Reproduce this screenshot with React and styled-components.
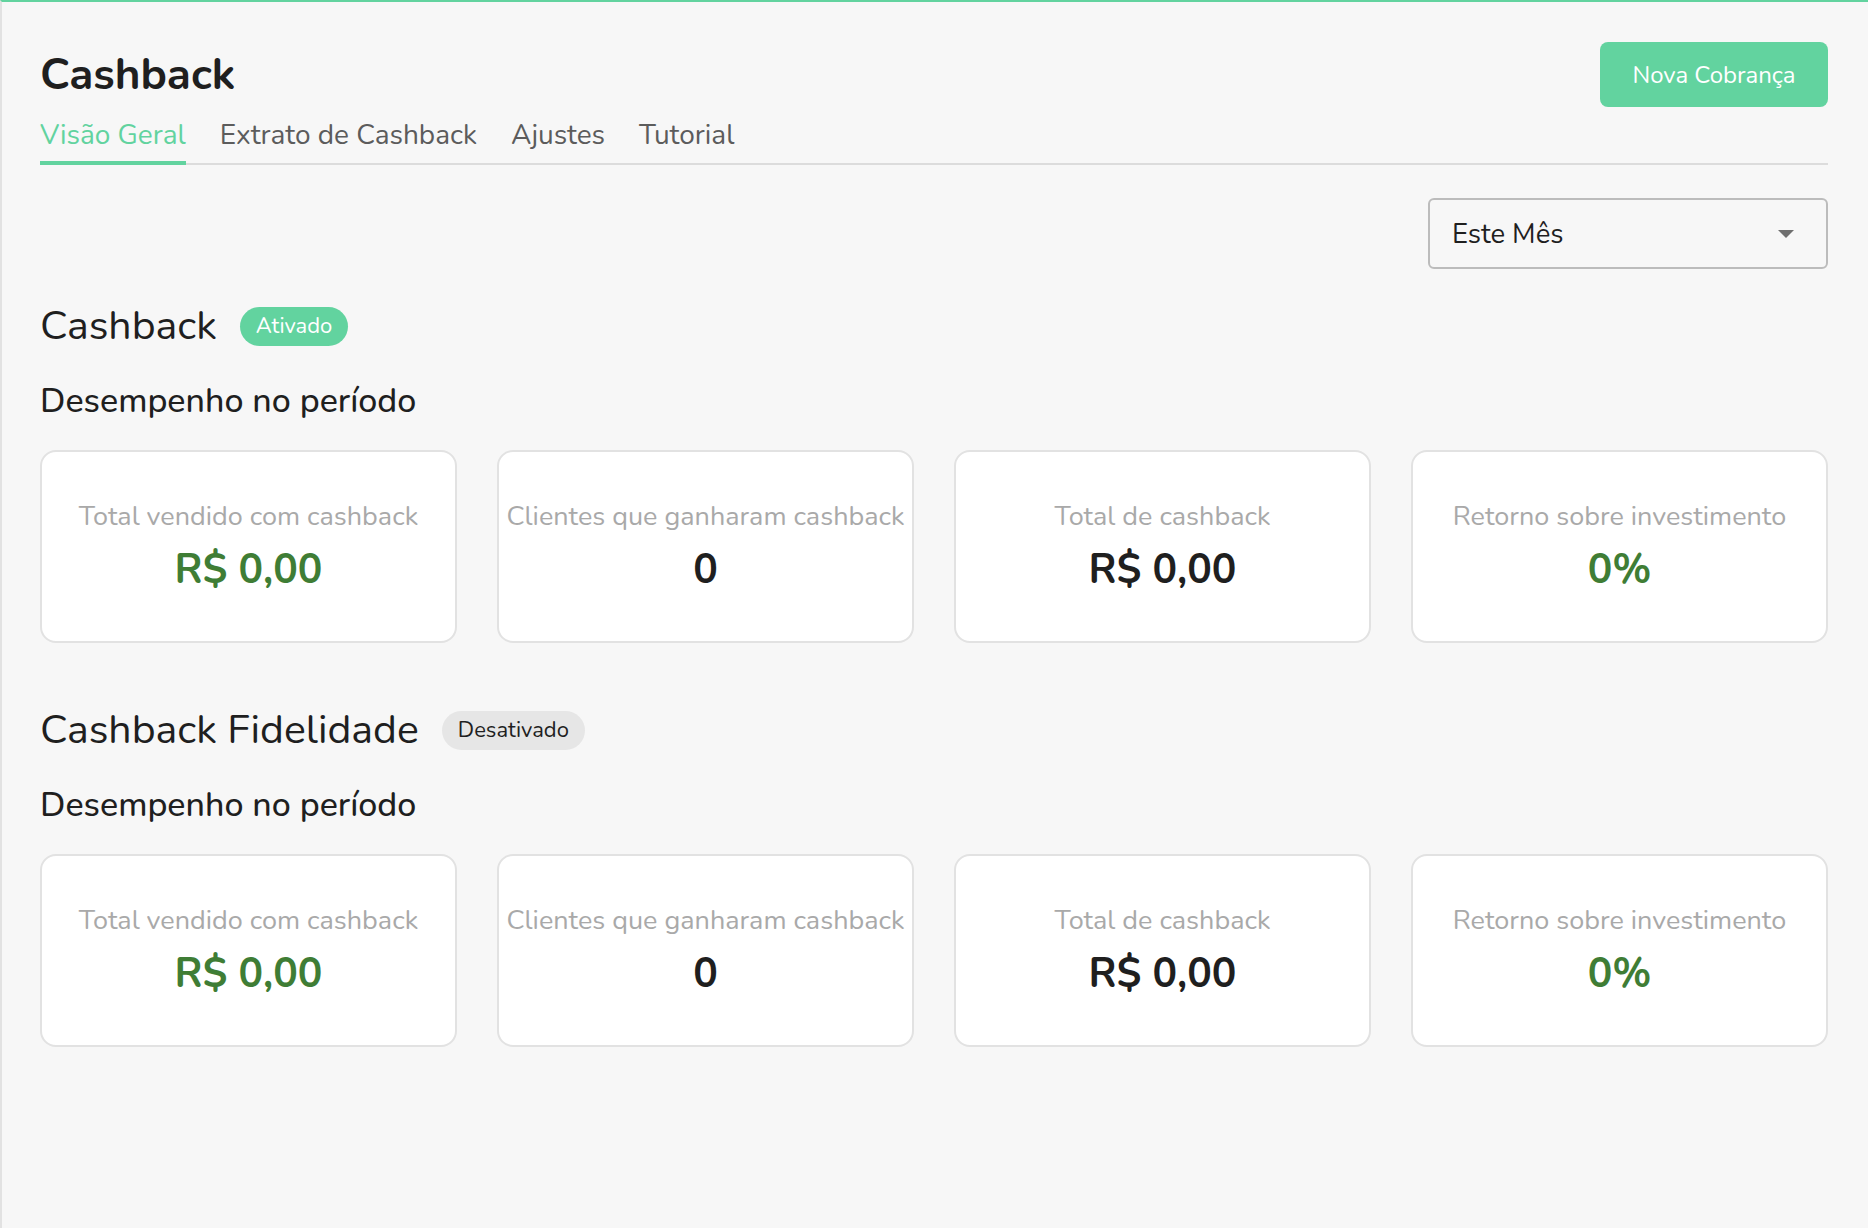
import React from "react";
import styled, { createGlobalStyle } from "styled-components";

const colors = {
  page: "#f7f7f7",
  primary: "#62d39f",
  line: "#dcdcdc",
  cardBorder: "#e2e2e2",
  text: "#1f1f1f",
  muted: "#a9a9a9",
  tab: "#5c5c5c",
  value: "#3f7d35",
};

const GlobalStyle = createGlobalStyle`
  * { box-sizing: border-box; }
  html, body {
    margin: 0;
    padding: 0;
    background: ${colors.page};
    font-family: "Nunito", "Lato", "Noto Sans", sans-serif;
    color: ${colors.text};
  }
`;

const Page = styled.main`
  min-height: 100vh;
  background: ${colors.page};
  border-top: 2px solid ${colors.primary};
  border-left: 2px solid #e2e2e2;
  padding: 0 40px 0 38px;
`;

const TopRow = styled.div`
  display: flex;
  align-items: center;
  justify-content: space-between;
  padding-top: 40px;
`;

const Title = styled.h1`
  margin: 0;
  font-size: 44px;
  font-weight: 700;
  color: ${colors.text};
`;

const PrimaryButton = styled.button`
  height: 65px;
  width: 228px;
  border: none;
  border-radius: 8px;
  background: ${colors.primary};
  color: #fff;
  font-family: inherit;
  font-size: 24px;
  cursor: pointer;
`;

const Tabs = styled.nav`
  display: flex;
  gap: 34px;
  border-bottom: 2px solid ${colors.line};
`;

const Tab = styled.a`
  padding: 11px 0 9px;
  font-size: 28px;
  line-height: 34px;
  color: ${(p) => (p.$active ? colors.primary : colors.tab)};
  border-bottom: 4px solid ${(p) => (p.$active ? colors.primary : "transparent")};
  margin-bottom: -2px;
  cursor: pointer;
`;

const FilterRow = styled.div`
  display: flex;
  justify-content: flex-end;
  margin-top: 33px;
`;

const Select = styled.div`
  width: 400px;
  height: 71px;
  display: flex;
  align-items: center;
  justify-content: space-between;
  padding: 0 32px 0 22px;
  border: 2px solid #bcbcbc;
  border-radius: 6px;
  font-size: 27.5px;
  color: ${colors.text};
`;

const Caret = styled.span`
  width: 0;
  height: 0;
  border-left: 8px solid transparent;
  border-right: 8px solid transparent;
  border-top: 8px solid #6f6f6f;
`;

const Section = styled.section`
  margin-top: ${(p) => p.$gap}px;
`;

const SectionHead = styled.div`
  display: flex;
  align-items: center;
  gap: 23px;
`;

const SectionTitle = styled.h2`
  margin: 0;
  font-size: 41px;
  font-weight: 400;
  line-height: 48px;
`;

const Badge = styled.span`
  display: inline-flex;
  align-items: center;
  height: 39px;
  padding: 0 16px;
  border-radius: 20px;
  font-size: 22px;
  background: ${(p) => (p.$on ? colors.primary : "#e6e6e6")};
  color: ${(p) => (p.$on ? "#fff" : colors.text)};
`;

const Subtitle = styled.h3`
  margin: 31px 0 0;
  font-size: 34px;
  font-weight: 500;
  line-height: 40px;
`;

const Cards = styled.div`
  display: grid;
  grid-template-columns: repeat(4, 1fr);
  gap: 40px;
  margin-top: 29px;
`;

const Card = styled.div`
  height: 193px;
  background: #fff;
  border: 2px solid ${colors.cardBorder};
  border-radius: 16px;
  display: flex;
  flex-direction: column;
  align-items: center;
  justify-content: center;
  gap: 14px;
  white-space: nowrap;
`;

const CardLabel = styled.span`
  font-size: 27px;
  color: ${colors.muted};
  line-height: 32px;
`;

const CardValue = styled.span`
  font-size: 41px;
  font-weight: 700;
  line-height: 46px;
  color: ${(p) => (p.$green ? colors.value : colors.text)};
`;

const metrics = [
  { label: "Total vendido com cashback", value: "R$ 0,00", green: true },
  { label: "Clientes que ganharam cashback", value: "0" },
  { label: "Total de cashback", value: "R$ 0,00" },
  { label: "Retorno sobre investimento", value: "0%", green: true },
];

const sections = [
  { title: "Cashback", on: true, badge: "Ativado", gap: 33 },
  { title: "Cashback Fidelidade", on: false, badge: "Desativado", gap: 63 },
];

const App = () => (
  <>
    <GlobalStyle />
    <Page>
      <TopRow>
        <Title>Cashback</Title>
        <PrimaryButton>Nova Cobrança</PrimaryButton>
      </TopRow>
      <Tabs>
        <Tab $active>Visão Geral</Tab>
        <Tab>Extrato de Cashback</Tab>
        <Tab>Ajustes</Tab>
        <Tab>Tutorial</Tab>
      </Tabs>
      <FilterRow>
        <Select>
          Este Mês
          <Caret />
        </Select>
      </FilterRow>
      {sections.map((s) => (
        <Section key={s.title} $gap={s.gap}>
          <SectionHead>
            <SectionTitle>{s.title}</SectionTitle>
            <Badge $on={s.on}>{s.badge}</Badge>
          </SectionHead>
          <Subtitle>Desempenho no período</Subtitle>
          <Cards>
            {metrics.map((m) => (
              <Card key={m.label}>
                <CardLabel>{m.label}</CardLabel>
                <CardValue $green={m.green}>{m.value}</CardValue>
              </Card>
            ))}
          </Cards>
        </Section>
      ))}
    </Page>
  </>
);

export default App;
